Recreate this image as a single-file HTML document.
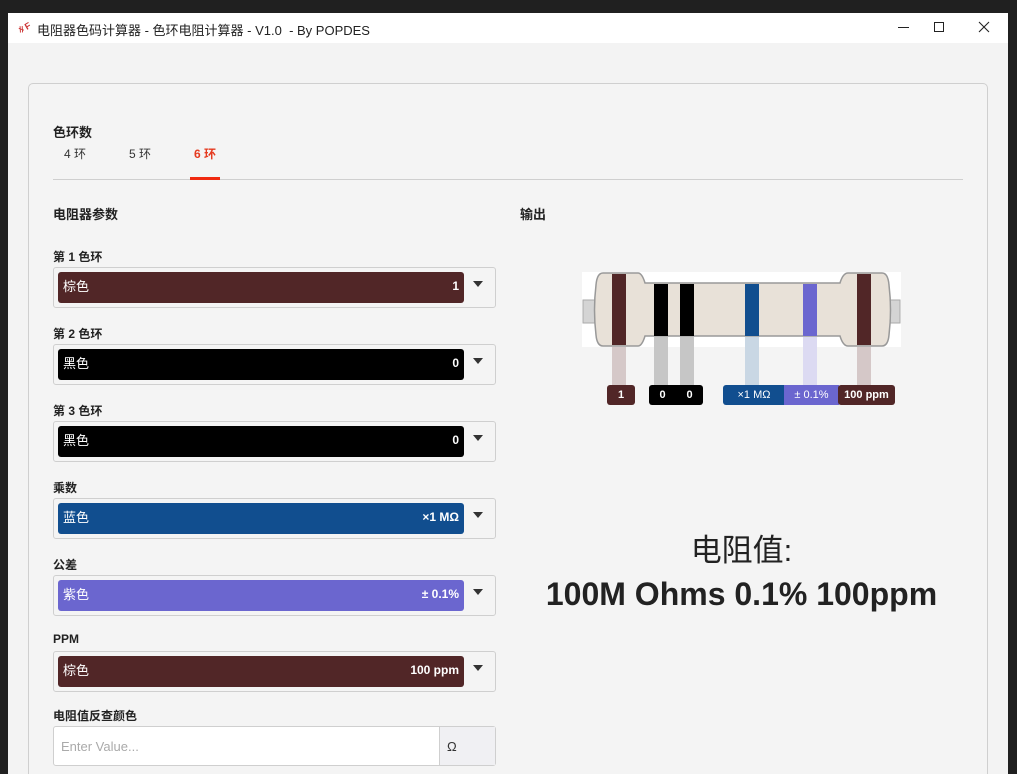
<!DOCTYPE html>
<html style="width:1017px;height:774px;overflow:hidden"><head><meta charset="utf-8">
<style>
*{margin:0;padding:0;box-sizing:border-box}
body{width:1017px;height:774px;background:#202020;position:relative;overflow:hidden;font-family:"Liberation Sans","Noto Sans CJK SC",sans-serif;color:#222}
.a{position:absolute}
#win{left:8px;top:13px;width:1000px;height:761px;background:#f3f3f3;overflow:hidden}
#tb{left:8px;top:13px;width:1000px;height:30px;background:#fff;font-size:13px;color:#222}
.card{left:20px;top:70px;width:960px;height:720px;border:1px solid #cfcfcf;border-radius:5px;background:#f4f4f4}
.lbl{font-size:12px;font-weight:bold;color:#222}
.sel{left:53px;width:443px;height:41px;border:1px solid #cfcfcf;border-radius:3px;background:#f4f4f4}
.sel .in{position:absolute;left:4px;top:4px;width:406px;height:31px;border-radius:3px;color:#fff;font-size:13px}
.sel .in span{position:absolute;top:6px;line-height:18px}
.sel .in .l{left:5px}
.sel .in .r{right:5px;font-weight:bold;font-size:12px;top:5px}
.arr{position:absolute;left:419px;top:13px;width:0;height:0;border-left:5px solid transparent;border-right:5px solid transparent;border-top:6px solid #333}
.tag{height:20px;top:385px;color:#fff;font-size:11px;font-weight:bold;text-align:center;line-height:20px}
</style></head><body>
<div class="a" id="win"><div class="a card"></div></div>
<div class="a" id="tb">
 <div class="a" style="left:8px;top:8px;width:16px;height:12px;color:#c33;font-size:9px;font-weight:bold;transform:rotate(-30deg)">∦F</div>
 <div class="a" style="left:29px;top:7px">电阻器色码计算器 - 色环电阻计算器 - V1.0 &nbsp;- By POPDES</div>
 <div class="a" style="left:890px;top:14px;width:11px;height:1px;background:#222"></div>
 <div class="a" style="left:926px;top:9px;width:10px;height:10px;border:1px solid #222"></div>
 <svg class="a" style="left:970px;top:8px" width="12" height="12"><path d="M1 1 L11 11 M11 1 L1 11" stroke="#222" stroke-width="1.1"/></svg>
</div>
<div class="a lbl" style="left:53px;top:122px;font-size:13px">色环数</div>
<div class="a" style="left:64px;top:145px;font-size:12px;color:#333">4 环</div>
<div class="a" style="left:129px;top:145px;font-size:12px;color:#333">5 环</div>
<div class="a" style="left:194px;top:145px;font-size:12px;color:#e53a1f;font-weight:bold">6 环</div>
<div class="a" style="left:53px;top:179px;width:910px;height:1px;background:#cfcfcf"></div>
<div class="a" style="left:190px;top:177px;width:30px;height:3px;background:#f02a10"></div>
<div class="a lbl" style="left:53px;top:204px;font-size:13px">电阻器参数</div>
<div class="a lbl" style="left:520px;top:204px;font-size:13px">输出</div>

<div class="a lbl" style="left:53px;top:248px">第 1 色环</div>
<div class="a sel" style="top:267px"><div class="in" style="background:#512627"><span class="l">棕色</span><span class="r">1</span></div><div class="arr"></div></div>
<div class="a lbl" style="left:53px;top:325px">第 2 色环</div>
<div class="a sel" style="top:344px"><div class="in" style="background:#000"><span class="l">黑色</span><span class="r">0</span></div><div class="arr"></div></div>
<div class="a lbl" style="left:53px;top:402px">第 3 色环</div>
<div class="a sel" style="top:421px"><div class="in" style="background:#000"><span class="l">黑色</span><span class="r">0</span></div><div class="arr"></div></div>
<div class="a lbl" style="left:53px;top:479px">乘数</div>
<div class="a sel" style="top:498px"><div class="in" style="background:#114e8f"><span class="l">蓝色</span><span class="r">×1 MΩ</span></div><div class="arr"></div></div>
<div class="a lbl" style="left:53px;top:556px">公差</div>
<div class="a sel" style="top:575px"><div class="in" style="background:#6b66cf"><span class="l">紫色</span><span class="r">± 0.1%</span></div><div class="arr"></div></div>
<div class="a lbl" style="left:53px;top:632px">PPM</div>
<div class="a sel" style="top:651px"><div class="in" style="background:#512627"><span class="l">棕色</span><span class="r">100 ppm</span></div><div class="arr"></div></div>
<div class="a lbl" style="left:53px;top:707px">电阻值反查颜色</div>
<div class="a" style="left:53px;top:726px;width:443px;height:40px;border:1px solid #cfcfcf;border-radius:3px;background:#fff"></div>
<div class="a" style="left:439px;top:727px;width:56px;height:38px;background:#f0f0f3;border-left:1px solid #cfcfcf"></div>
<div class="a" style="left:61px;top:739px;font-size:13px;color:#aaa">Enter Value...</div>
<div class="a" style="left:447px;top:739px;font-size:13px;color:#333">Ω</div>

<svg class="a" style="left:0;top:0" width="1017" height="774">
 <rect x="582" y="272" width="319" height="75" fill="#fff"/>
 <rect x="583" y="300" width="14" height="23" fill="#d4d4d4" stroke="#aaa"/>
 <rect x="886" y="300" width="14" height="23" fill="#d4d4d4" stroke="#aaa"/>
 <path d="M603 273 L638 273 Q642 273 645 283 L840 283 Q843 273 848 273 L882 273 Q888 273 889 285 Q892 310 889 335 Q888 346 882 346 L848 346 Q843 346 840 336 L645 336 Q642 346 638 346 L603 346 Q597 346 596 335 Q593 310 596 285 Q597 273 603 273 Z" fill="#e8e1d8" stroke="#999" stroke-width="1.5"/>
 <rect x="612" y="274" width="14" height="71" fill="#512627"/>
 <rect x="654" y="284" width="14" height="52" fill="#000"/>
 <rect x="680" y="284" width="14" height="52" fill="#000"/>
 <rect x="745" y="284" width="14" height="52" fill="#114e8f"/>
 <rect x="803" y="284" width="14" height="52" fill="#6b66cf"/>
 <rect x="857" y="274" width="14" height="71" fill="#512627"/>
 <rect x="612" y="347" width="14" height="38" fill="#d5c8c8"/>
 <rect x="654" y="337" width="14" height="48" fill="#c6c6c6"/>
 <rect x="680" y="337" width="14" height="48" fill="#c6c6c6"/>
 <rect x="745" y="337" width="14" height="48" fill="#c9d7e4"/>
 <rect x="803" y="337" width="14" height="48" fill="#dcdaf2"/>
 <rect x="857" y="347" width="14" height="38" fill="#d5c8c8"/>
</svg>
<div class="a tag" style="left:607px;width:28px;background:#512627;border-radius:3px">1</div>
<div class="a tag" style="left:649px;width:54px;background:#000;border-radius:3px"><span style="display:inline-block;width:27px">0</span><span style="display:inline-block;width:27px">0</span></div>
<div class="a tag" style="left:723px;width:62px;background:#114e8f;border-radius:3px 0 0 3px;font-weight:normal">×1 MΩ</div>
<div class="a tag" style="left:784px;width:55px;background:#6b66cf;font-weight:normal">± 0.1%</div>
<div class="a tag" style="left:838px;width:57px;background:#512627;border-radius:3px">100 ppm</div>

<div class="a" style="left:520px;top:525px;width:443px;text-align:center;font-size:31px;color:#222">电阻值:</div>
<div class="a" style="left:520px;top:576px;width:443px;text-align:center;font-size:32px;font-weight:bold;color:#222">100M Ohms 0.1% 100ppm</div>
</body></html>
